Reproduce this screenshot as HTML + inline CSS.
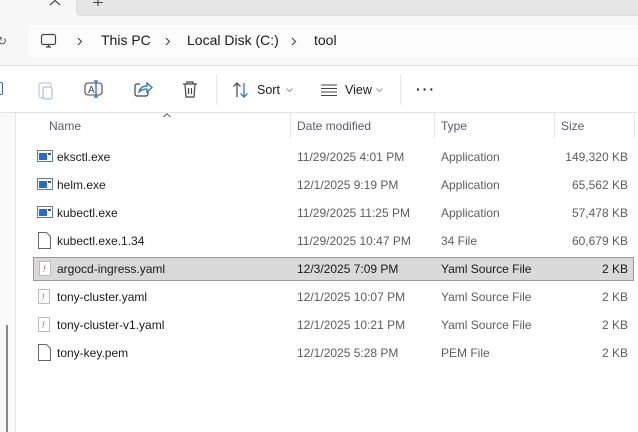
<!DOCTYPE html>
<html><head><meta charset="utf-8"><style>
*{margin:0;padding:0;box-sizing:border-box}
body{width:638px;height:432px;overflow:hidden;background:#fff;font-family:"Segoe UI","Liberation Sans",sans-serif;font-size:12px;color:#1a1a1a;position:relative}
.abs{position:absolute}
.row{position:absolute;left:33px;width:601px;height:24px}
.row span{position:absolute;top:5px;white-space:nowrap}
.n{left:24px}.d{left:264px;color:#5d5d5d}.t{left:408px;color:#5d5d5d}.s{right:6px;color:#5d5d5d}
.hd{position:absolute;top:119px;color:#5b5b6b;font-size:12px}
.sep{position:absolute;top:113px;width:1px;height:25px;background:#e5e5e5}
</style></head><body>
<div class="abs" style="left:0;top:0;width:638px;height:66px;background:#f7f7f7"></div>
<div class="abs" style="left:76px;top:-8px;width:570px;height:24px;background:#e6e6e6;border-radius:0 0 0 6px;border-bottom:1px solid #dcdcdc;border-left:1px solid #dcdcdc"></div>
<svg class="abs" style="left:49px;top:0" width="12" height="6"><path d="M1 5 6 0.5 11 5" fill="none" stroke="#333" stroke-width="1.1"/></svg>
<svg class="abs" style="left:92px;top:0" width="12" height="6"><path d="M6 0v6M1 2.5h10" stroke="#444" stroke-width="1.1"/></svg>
<div class="abs" style="left:-3px;top:34px;font-size:12px;color:#555">↻</div>
<div class="abs" style="left:28px;top:25px;width:620px;height:32px;background:#fcfcfc;border-radius:5px"></div>
<svg class="abs" style="left:40px;top:33px" width="18" height="16" viewBox="0 0 18 16"><rect x="1.5" y="1.5" width="14" height="10" rx="2" fill="none" stroke="#444" stroke-width="1.2"/><path d="M6 14h5M8.5 11.5v2.5" stroke="#444" stroke-width="1.2"/></svg>
<svg class="abs" style="left:77px;top:37px" width="6" height="9"><path d="M1 1l3.5 3.5L1 8" fill="none" stroke="#444" stroke-width="1.1"/></svg>
<div class="abs" style="left:101px;top:32px;font-size:14px;color:#1a1a1a">This PC</div>
<svg class="abs" style="left:165px;top:37px" width="6" height="9"><path d="M1 1l3.5 3.5L1 8" fill="none" stroke="#444" stroke-width="1.1"/></svg>
<div class="abs" style="left:187px;top:32px;font-size:14px;color:#1a1a1a">Local Disk (C:)</div>
<svg class="abs" style="left:291px;top:37px" width="6" height="9"><path d="M1 1l3.5 3.5L1 8" fill="none" stroke="#444" stroke-width="1.1"/></svg>
<div class="abs" style="left:314px;top:32px;font-size:14px;color:#1a1a1a">tool</div>
<div class="abs" style="left:0;top:65px;width:638px;height:1px;background:#e0e0e0"></div>
<div class="abs" style="left:0;top:112px;width:638px;height:1px;background:#e5e5e5"></div>
<!-- toolbar -->
<div class="abs" style="left:-6px;top:82px;width:9px;height:13px;border:1.3px solid #1f6fc0;border-radius:2px"></div>
<svg class="abs" style="left:37px;top:80px" width="18" height="20" viewBox="0 0 18 20"><rect x="2" y="3" width="12" height="15" rx="2" fill="none" stroke="#bfc9d4" stroke-width="1.2"/><rect x="6" y="7" width="9" height="12" rx="2" fill="#fff" stroke="#a9c3dd" stroke-width="1.2"/></svg>
<svg class="abs" style="left:84px;top:80px" width="20" height="18" viewBox="0 0 20 18"><rect x="1" y="3" width="17" height="12" rx="3" fill="none" stroke="#444" stroke-width="1.1"/><text x="4" y="13" font-size="10" fill="#444" font-family="Liberation Sans">A</text><path d="M12 1v16M10 1h4M10 17h4" stroke="#1f6fc0" stroke-width="1.3"/></svg>
<svg class="abs" style="left:133px;top:80px" width="20" height="18" viewBox="0 0 20 18"><path d="M7 4H4a2 2 0 0 0-2 2v8a2 2 0 0 0 2 2h9a2 2 0 0 0 2-2v-2" fill="none" stroke="#444" stroke-width="1.2"/><path d="M6 12c1-4 4-6 8-6V3l5 4.5-5 4.5V9c-3 0-6 1-8 3z" fill="none" stroke="#1f6fc0" stroke-width="1.2"/></svg>
<svg class="abs" style="left:181px;top:80px" width="18" height="20" viewBox="0 0 18 20"><path d="M2 4h14M6 4V2h6v2M4 4l1 13h8l1-13M7.5 8v6M10.5 8v6" fill="none" stroke="#444" stroke-width="1.2"/></svg>
<div class="abs" style="left:216px;top:75px;width:1px;height:30px;background:#e5e5e5"></div>
<svg class="abs" style="left:232px;top:81px" width="18" height="18" viewBox="0 0 18 18"><path d="M5 16V2M1.5 5.5 5 2l3.5 3.5" fill="none" stroke="#444" stroke-width="1.2"/><path d="M12 2v14M8.5 12.5 12 16l3.5-3.5" fill="none" stroke="#1f6fc0" stroke-width="1.2"/></svg>
<div class="abs" style="left:257px;top:83px;font-size:12.5px">Sort</div>
<svg class="abs" style="left:286px;top:88px" width="7" height="5"><path d="M0.5 0.5 3.5 3.5 6.5 0.5" fill="none" stroke="#999" stroke-width="1"/></svg>
<svg class="abs" style="left:320px;top:83px" width="18" height="14" viewBox="0 0 18 14"><path d="M1 2h16M1 5.5h16M1 9h16M1 12.5h16" stroke="#444" stroke-width="1"/></svg>
<div class="abs" style="left:345px;top:83px;font-size:12.5px">View</div>
<svg class="abs" style="left:376px;top:88px" width="7" height="5"><path d="M0.5 0.5 3.5 3.5 6.5 0.5" fill="none" stroke="#999" stroke-width="1"/></svg>
<div class="abs" style="left:400px;top:75px;width:1px;height:30px;background:#e5e5e5"></div>
<div class="abs" style="left:416px;top:81px;font-size:14px;font-weight:bold;letter-spacing:2px;color:#222">···</div>
<!-- left pane -->
<div class="abs" style="left:0;top:113px;width:16px;height:319px;background:#f9f9f9;border-right:1px solid #e5e5e5"></div>
<div class="abs" style="left:6px;top:325px;width:2px;height:107px;background:#8a8a8a"></div>
<!-- header -->
<div class="hd" style="left:49px">Name</div>
<svg class="abs" style="left:163px;top:113px" width="8" height="5"><path d="M0.5 4 4 0.8 7.5 4" fill="none" stroke="#555" stroke-width="1"/></svg>
<div class="sep" style="left:290px"></div><div class="hd" style="left:297px">Date modified</div>
<div class="sep" style="left:434px"></div><div class="hd" style="left:441px">Type</div>
<div class="sep" style="left:554px"></div><div class="hd" style="left:561px">Size</div>
<div class="sep" style="left:634px"></div>
<!-- rows -->
<div class="row" style="top:145px"><svg class="abs" style="left:4px;top:5px" width="16" height="13"><rect x="0.5" y="0.5" width="15" height="11" fill="#fff" stroke="#6b7a8a"/><rect x="2" y="3" width="8" height="7" fill="#1e6fd0"/><rect x="11" y="3" width="3" height="2" fill="#555"/></svg><span class="n">eksctl.exe</span><span class="d">11/29/2025 4:01 PM</span><span class="t">Application</span><span class="s">149,320 KB</span></div>
<div class="row" style="top:173px"><svg class="abs" style="left:4px;top:5px" width="16" height="13"><rect x="0.5" y="0.5" width="15" height="11" fill="#fff" stroke="#6b7a8a"/><rect x="2" y="3" width="8" height="7" fill="#1e6fd0"/><rect x="11" y="3" width="3" height="2" fill="#555"/></svg><span class="n">helm.exe</span><span class="d">12/1/2025 9:19 PM</span><span class="t">Application</span><span class="s">65,562 KB</span></div>
<div class="row" style="top:201px"><svg class="abs" style="left:4px;top:5px" width="16" height="13"><rect x="0.5" y="0.5" width="15" height="11" fill="#fff" stroke="#6b7a8a"/><rect x="2" y="3" width="8" height="7" fill="#1e6fd0"/><rect x="11" y="3" width="3" height="2" fill="#555"/></svg><span class="n">kubectl.exe</span><span class="d">11/29/2025 11:25 PM</span><span class="t">Application</span><span class="s">57,478 KB</span></div>
<div class="row" style="top:229px"><svg class="abs" style="left:5px;top:3px" width="13" height="17"><path d="M0.5 0.5h8l4 4v12h-12z" fill="#fff" stroke="#666"/></svg><span class="n">kubectl.exe.1.34</span><span class="d">11/29/2025 10:47 PM</span><span class="t">34 File</span><span class="s">60,679 KB</span></div>
<div class="row" style="top:257px;background:#d9d9d9;border:1px solid #999"><svg class="abs" style="left:5px;top:3px" width="13" height="16"><rect x="0.5" y="0.5" width="11" height="14" fill="#fff" stroke="#bbb"/><text x="4" y="11" font-size="9" font-style="italic" fill="#8a4fc0" font-family="Liberation Sans">!</text></svg><span class="n" style="top:4px;left:23px">argocd-ingress.yaml</span><span class="d" style="top:4px;left:263px;color:#1a1a1a">12/3/2025 7:09 PM</span><span class="t" style="top:4px;left:407px;color:#1a1a1a">Yaml Source File</span><span class="s" style="top:4px;right:5px;color:#1a1a1a">2 KB</span></div>
<div class="row" style="top:285px"><svg class="abs" style="left:5px;top:4px" width="13" height="16"><rect x="0.5" y="0.5" width="11" height="14" fill="#fff" stroke="#bbb"/><text x="4" y="11" font-size="9" font-style="italic" fill="#8a4fc0" font-family="Liberation Sans">!</text></svg><span class="n">tony-cluster.yaml</span><span class="d">12/1/2025 10:07 PM</span><span class="t">Yaml Source File</span><span class="s">2 KB</span></div>
<div class="row" style="top:313px"><svg class="abs" style="left:5px;top:4px" width="13" height="16"><rect x="0.5" y="0.5" width="11" height="14" fill="#fff" stroke="#bbb"/><text x="4" y="11" font-size="9" font-style="italic" fill="#8a4fc0" font-family="Liberation Sans">!</text></svg><span class="n">tony-cluster-v1.yaml</span><span class="d">12/1/2025 10:21 PM</span><span class="t">Yaml Source File</span><span class="s">2 KB</span></div>
<div class="row" style="top:341px"><svg class="abs" style="left:5px;top:3px" width="13" height="17"><path d="M0.5 0.5h8l4 4v12h-12z" fill="#fff" stroke="#666"/></svg><span class="n">tony-key.pem</span><span class="d">12/1/2025 5:28 PM</span><span class="t">PEM File</span><span class="s">2 KB</span></div>
</body></html>
